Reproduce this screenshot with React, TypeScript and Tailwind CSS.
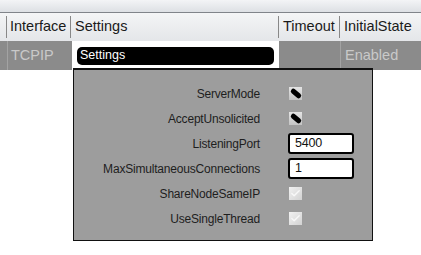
import { Check } from "lucide-react";

const fields = [
  { label: "ServerMode", kind: "dash" },
  { label: "AcceptUnsolicited", kind: "dash" },
  { label: "ListeningPort", kind: "input", value: "5400" },
  { label: "MaxSimultaneousConnections", kind: "input", value: "1" },
  { label: "ShareNodeSameIP", kind: "check" },
  { label: "UseSingleThread", kind: "check" },
];

const Control = ({ kind, value }: { kind: string; value?: string }) => {
  if (kind === "input") {
    return (
      <div className="ml-[-1px] flex h-[21px] w-[66px] items-center rounded-[3px] border-2 border-black bg-white px-[5px] text-[12.5px] text-[#111]">
        {value}
      </div>
    );
  }
  if (kind === "dash") {
    return (
      <div className="relative h-[13px] w-[13px] bg-gradient-to-b from-[#e4e4e4] to-[#c4c4c4]">
        <div className="absolute left-[1px] top-[4px] h-[5px] w-[12px] rotate-[40deg] rounded-full bg-black" />
      </div>
    );
  }
  return (
    <div className="flex h-[13px] w-[13px] items-center justify-center bg-gradient-to-br from-[#f2f2f2] to-[#d2d2d2]">
      <Check size={11} strokeWidth={3} className="text-[#f8f8f8]" />
    </div>
  );
};

export default function App() {
  return (
    <div className="relative h-[255px] w-[421px] overflow-hidden bg-white font-['Liberation_Sans',Arial,sans-serif]">
      <div className="h-[12px] bg-gradient-to-b from-[#f3f4f6] to-[#dde0e4]" />
      <div className="h-px bg-[#80848a]" />

      {/* header */}
      <div className="flex h-[28px] items-center bg-gradient-to-b from-[#f4f5f6] to-[#e4e6e9] text-[14.5px] text-[#1a1a1a]">
        <div className="h-full w-[7px] border-r border-[#8a8a8a] [border-image:linear-gradient(transparent_15%,#888_15%,#888_85%,transparent_85%)_1]" />
        <div className="flex h-full w-[64px] items-center border-r border-[#8a8a8a] pl-[3px] [border-image:linear-gradient(transparent_15%,#888_15%,#888_85%,transparent_85%)_1]">
          Interface
        </div>
        <div className="flex h-full w-[208px] items-center border-r border-[#8a8a8a] pl-[4px] [border-image:linear-gradient(transparent_15%,#888_15%,#888_85%,transparent_85%)_1]">
          Settings
        </div>
        <div className="flex h-full w-[61px] items-center border-r border-[#8a8a8a] pl-[4px] [border-image:linear-gradient(transparent_15%,#888_15%,#888_85%,transparent_85%)_1]">
          Timeout
        </div>
        <div className="flex h-full flex-1 items-center pl-[4px]">InitialState</div>
      </div>

      {/* data row */}
      <div className="flex h-[29px] text-[14.5px] text-[#c9c9c9]">
        <div className="w-[8px] border-r border-[#a3a3a3] bg-[#8b8b8b]" />
        <div className="flex w-[64px] items-center bg-[#8b8b8b] pl-[3px] pt-px">TCPIP</div>
        <div className="flex w-[207px] items-center bg-white px-[5px]">
          <div className="flex h-[18px] w-full items-center rounded-[5px] bg-black pl-[3px] text-[12.5px] text-white">
            Settings
          </div>
        </div>
        <div className="w-[62px] border-r border-[#a3a3a3] bg-[#8b8b8b]" />
        <div className="flex flex-1 items-center bg-[#8b8b8b] pl-[4px] pt-px">Enabled</div>
      </div>

      {/* settings popup */}
      <div className="absolute left-[73px] top-[68px] h-[173px] w-[300px] border border-t-2 border-[#111] bg-[#9d9d9d] pt-[11px]">
        <div className="grid grid-cols-[186px_auto] gap-x-[29px] text-[12px] tracking-[-0.2px] text-[#1e1e1e]">
          {fields.map((f) => (
            <div key={f.label} className="contents">
              <div className="flex h-[25px] items-center justify-end">{f.label}</div>
              <div className="flex h-[25px] items-center">
                <Control kind={f.kind} value={f.value} />
              </div>
            </div>
          ))}
        </div>
      </div>
    </div>
  );
}
